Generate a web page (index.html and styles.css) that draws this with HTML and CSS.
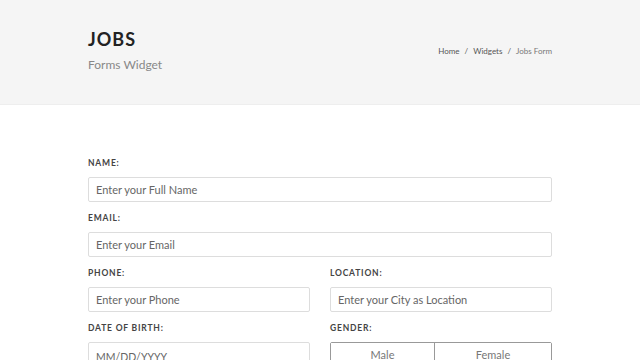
FILE: index.html
```html
<!DOCTYPE html>
<html>
  <head>
    <meta name="viewport" content="width=device-width, initial-scale=1.0" />
    <meta charset="utf-8" />
    <title>Jobs - Forms Widget</title>
    <link rel="stylesheet" href="styles.css">
  </head>
  <body>
    <section class="page-title">
      <div class="container title-row">
        <div>
          <h1>Jobs</h1>
          <span class="subtitle">Forms Widget</span>
        </div>
        <ol class="breadcrumb">
          <li><a href="#">Home</a></li>
          <li><a href="#">Widgets</a></li>
          <li class="active">Jobs Form</li>
        </ol>
      </div>
    </section>

    <section class="content">
      <form class="container jobs-form">
        <div class="field">
          <label for="name">Name:</label>
          <input id="name" type="text" placeholder="Enter your Full Name" />
        </div>
        <div class="field">
          <label for="email">Email:</label>
          <input id="email" type="email" placeholder="Enter your Email" />
        </div>
        <div class="row">
          <div class="field">
            <label for="phone">Phone:</label>
            <input id="phone" type="text" placeholder="Enter your Phone" />
          </div>
          <div class="field">
            <label for="location">Location:</label>
            <input id="location" type="text" placeholder="Enter your City as Location" />
          </div>
        </div>
        <div class="row">
          <div class="field">
            <label for="dob">Date of Birth:</label>
            <input id="dob" class="large" type="text" placeholder="MM/DD/YYYY" />
          </div>
          <div class="field">
            <label>Gender:</label>
            <div class="btn-group">
              <button type="button" class="btn btn-male">Male</button>
              <button type="button" class="btn btn-female">Female</button>
            </div>
          </div>
        </div>
      </form>
    </section>
  </body>
</html>
```

FILE: styles.css
```css
body {
  margin: 0;
  font-family: Lato, "Open Sans", Helvetica, Arial, sans-serif;
  color: #333;
  background: #fff;
}
.container {
  width: 464px;
  margin: 0 auto;
}
.page-title {
  background-color: #f5f5f5;
  border-bottom: 1px solid #eee;
}
.title-row {
  height: 104px;
  display: flex;
  align-items: center;
  justify-content: space-between;
}
.title-row > div {
  margin-bottom: 4px;
}
.title-row h1 {
  margin: 0 0 6px;
  font-size: 18px;
  font-weight: 700;
  letter-spacing: 1px;
  text-transform: uppercase;
  line-height: 24px;
  color: #222;
}
.subtitle {
  display: block;
  font-size: 12px;
  font-weight: 400;
  line-height: 16px;
  color: #888;
}
.breadcrumb {
  list-style: none;
  margin: 0 0 2px;
  padding: 0;
  display: flex;
  font-size: 8px;
  color: #555;
}
.breadcrumb li + li::before {
  content: "/";
  padding: 0 5px;
  color: #555;
}
.breadcrumb a {
  color: #555;
  text-decoration: none;
}
.breadcrumb .active {
  color: #777;
}
.jobs-form {
  padding-top: 51px;
}
.row {
  display: flex;
  gap: 20px;
}
.row .field {
  flex: 1;
}
.field {
  padding-bottom: 9px;
}
.field label {
  display: block;
  margin-bottom: 7px;
  font-size: 8.5px;
  font-weight: 700;
  line-height: 14px;
  letter-spacing: 0.8px;
  text-transform: uppercase;
  color: #444;
}
.field input {
  display: block;
  box-sizing: border-box;
  width: 100%;
  height: 25px;
  padding: 0 7px;
  border: 1px solid #ddd;
  border-radius: 2px;
  font-family: inherit;
  font-size: 11px;
  color: #555;
  background: #fff;
}
.field input::placeholder {
  color: #666;
}
.field input.large {
  font-size: 10.5px;
  padding-top: 4px;
}
.btn-group {
  display: flex;
  height: 25px;
  border: 1px solid #999;
  border-radius: 2px;
  box-sizing: border-box;
}
.btn {
  padding: 0;
  border: 0;
  background: #fff;
  font-family: inherit;
  font-size: 11px;
  font-weight: 400;
  line-height: 23px;
  color: #777;
}
.btn-male {
  width: 104px;
  border-right: 1px solid #999;
}
.btn-female {
  flex: 1;
}
```
